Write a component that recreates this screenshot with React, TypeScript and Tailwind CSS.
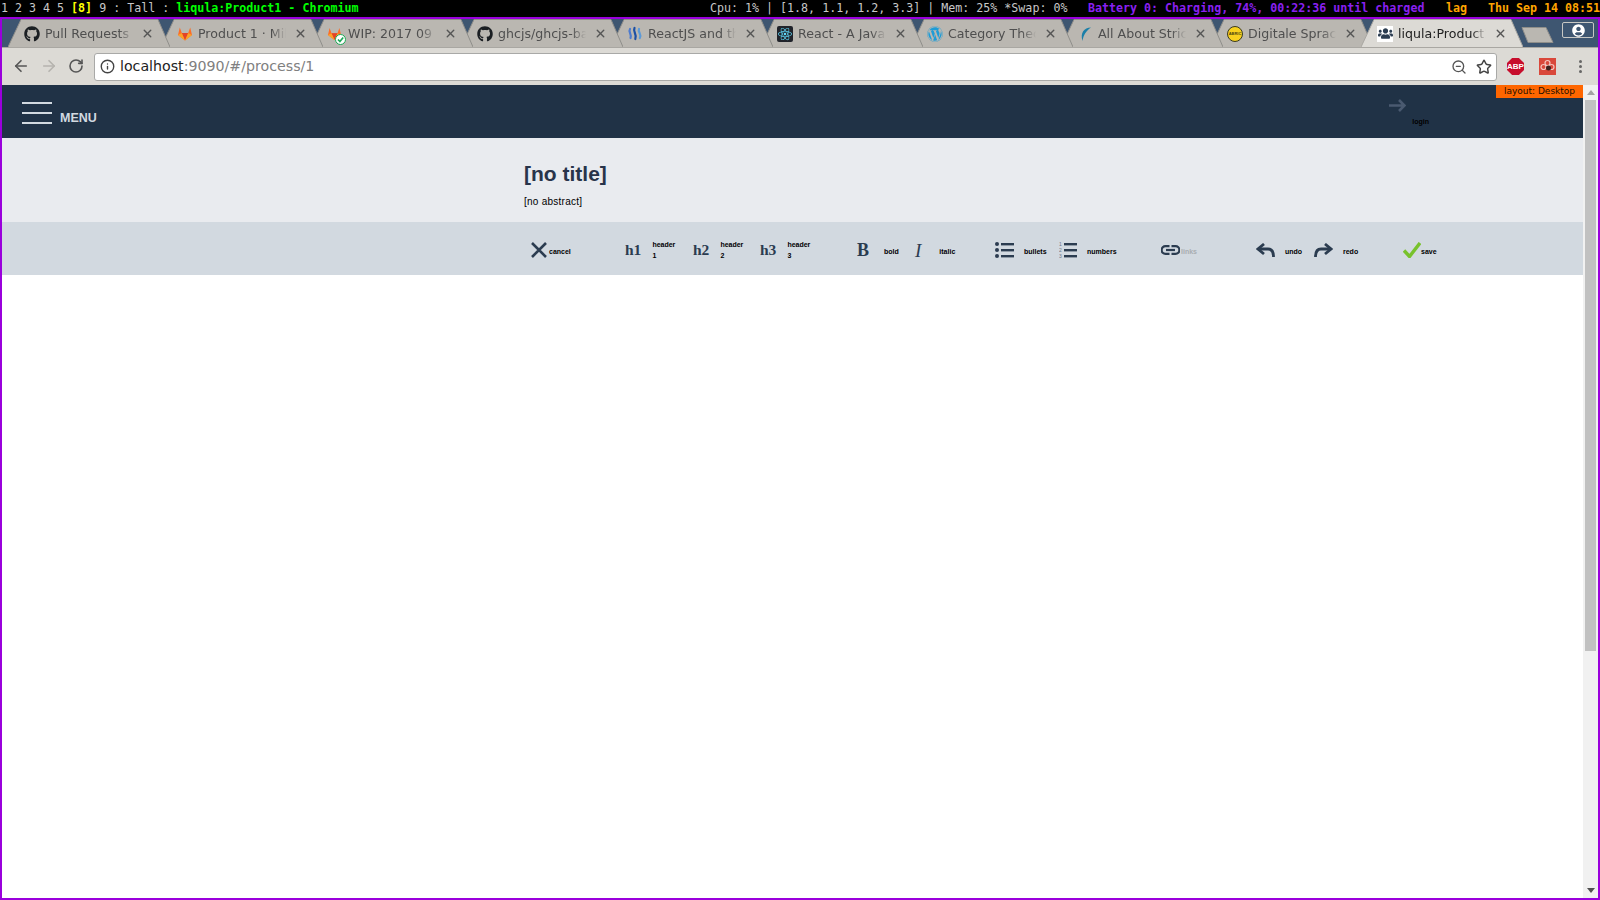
import { ArrowLeft, ArrowRight, Info, RotateCw, Star, X, ZoomOut } from 'lucide-react'
import type { ReactNode } from 'react'
import { FaGithub, FaReact, FaUsers, FaUserCircle, FaWordpress } from 'react-icons/fa'

const ink = '#2b3c50'

function GitlabIcon({ size = 17 }: { size?: number }): JSX.Element {
  return (
    <svg width={size} height={size} viewBox="0 0 16 16">
      <path d="M8 15 1 9.6 2.8 2l2 5.6h6.4L13.2 2 15 9.6z" fill="#fc6d26" />
      <path d="M8 15 4.8 7.6h6.4z" fill="#e24329" />
      <path d="M8 15 1 9.6l3.8-2zM8 15l7-5.4-3.8-2z" fill="#fca326" />
    </svg>
  )
}

function SteemIcon(): JSX.Element {
  return (
    <svg width="16" height="16" viewBox="0 0 16 16" fill="none" strokeWidth="2.2" strokeLinecap="round">
      <path d="M3 3c-2 3 2 5 .5 9" stroke="#4c7bd0" />
      <path d="M7.500 2c-2 4 3 6 .8 11" stroke="#1a4fa5" />
      <path d="M12 3c-1.500 3 3 5 .8 9" stroke="#5c9ad8" />
    </svg>
  )
}

function ReactFavicon(): JSX.Element {
  return (
    <span className="flex h-4 w-4 items-center justify-center rounded-[2px] bg-[#20232a] text-[#61dafb]">
      <FaReact size={14} />
    </span>
  )
}

function GitlabCheck(): JSX.Element {
  return (
    <span className="relative block h-4 w-4">
      <GitlabIcon size={15} />
      <span className="absolute -right-[3px] -bottom-[3px] flex h-[11px] w-[11px] items-center justify-center rounded-full border border-[#1aaa55] bg-white">
        <svg width="7" height="7" viewBox="0 0 6 6" fill="none" stroke="#1aaa55" strokeWidth="1.4">
          <path d="M.8 3 2.500 4.700 5.300 1.300" />
        </svg>
      </span>
    </span>
  )
}

function DolphinIcon(): JSX.Element {
  return (
    <svg width="16" height="16" viewBox="0 0 16 16" fill="none">
      <path d="M14 1.500C7 1.500 3 7 5.500 15 6.500 9 9 5 14 1.500z" fill="#1b7fa8" />
    </svg>
  )
}

function CoinIcon(): JSX.Element {
  return (
    <span className="flex h-4 w-4 items-center justify-center rounded-full border border-[#3a3a20] bg-[#f7d11e] font-['Liberation_Sans',sans-serif] text-[4px] leading-none font-bold text-[#4a4210]">
      ABRIC
    </span>
  )
}

function UsersFavicon(): JSX.Element {
  return (
    <span className="flex h-4 w-4 items-center justify-center bg-white text-[#2b3c50]">
      <FaUsers size={15} />
    </span>
  )
}

const tabs: { title: string; icon: ReactNode }[] = [
  { title: 'Pull Requests ·', icon: <FaGithub size={16} color="#1b1f23" /> },
  { title: 'Product 1 · Mil', icon: <GitlabIcon /> },
  { title: 'WIP: 2017 09 1', icon: <GitlabCheck /> },
  { title: 'ghcjs/ghcjs-ba', icon: <FaGithub size={16} color="#1b1f23" /> },
  { title: 'ReactJS and th', icon: <SteemIcon /> },
  { title: 'React - A Java', icon: <ReactFavicon /> },
  { title: 'Category Theo', icon: <FaWordpress size={16} color="#1e9cd7" /> },
  { title: 'All About Stric', icon: <DolphinIcon /> },
  { title: 'Digitale Sprac', icon: <CoinIcon /> },
  { title: 'liqula:Product1', icon: <UsersFavicon /> }
]

function Tab({ title, icon, active, index }: { title: string; icon: ReactNode; active: boolean; index: number }): JSX.Element {
  return (
    <div
      className={`relative h-[28px] w-[162px] shrink-0 ${index === 0 ? '-mr-[9px]' : '-mr-[12px]'}`}
      style={{ zIndex: active ? 20 : 12 - index }}
    >
      <svg className="absolute inset-0" width="162" height="28" viewBox="0 0 162 28">
        <path
          d="M0 28 13 .5H150L162 28"
          fill={active ? '#dcdad5' : '#bab7b1'}
          stroke={active ? '#a9a7a2' : '#8f8e8a'}
        />
      </svg>
      <div className="relative flex h-full items-center pt-[1px] pl-[16px]">
        <span className="flex h-4 w-4 shrink-0 items-center justify-center">{icon}</span>
        <span
          className={`mt-[1px] ml-[5px] w-[90px] overflow-hidden whitespace-nowrap text-[12.600px] [mask-image:linear-gradient(to_right,black_82%,transparent_98%)] ${
            active ? 'text-[#222]' : 'text-[#4f4f4f]'
          }`}
        >
          {title}
        </span>
        <X className="ml-[6px] text-[#555]" size={13} strokeWidth={2.6} />
      </div>
    </div>
  )
}

function TabStrip(): JSX.Element {
  return (
    <div className="flex h-[28px] items-start bg-[#3e5671] pl-[6px]">
      {tabs.map((t, i) => (
        <Tab key={t.title} title={t.title} icon={t.icon} index={i} active={i === tabs.length - 1} />
      ))}
      <svg className="mt-[8px] ml-[10px] shrink-0" width="33" height="16" viewBox="0 0 33 16">
        <path d="M1 .5H25L32 15.500H7z" fill="#bab7b1" stroke="#8f8e8a" />
      </svg>
      <div className="mt-[3px] ml-[8px] flex h-[16px] w-[32px] shrink-0 items-center justify-center rounded-[2px] border border-[#c8c8c4] bg-[#3e5671] text-white">
        <FaUserCircle size={13} />
      </div>
    </div>
  )
}

function AbpBadge(): JSX.Element {
  return (
    <span className="ml-[10px] flex h-[17px] w-[17px] items-center justify-center bg-[#c70d2c] font-['Liberation_Sans',sans-serif] text-[8px] font-bold text-white [clip-path:polygon(30%_0,70%_0,100%_30%,100%_70%,70%_100%,30%_100%,0_70%,0_30%)]">
      ABP
    </span>
  )
}

function BrowserToolbar(): JSX.Element {
  return (
    <div className="flex h-[38px] items-center border-t border-[#a9a7a2] bg-[#dcdad5] pl-[10px]">
      <ArrowLeft size={18} strokeWidth={2.2} className="-mt-[1px] text-[#555]" />
      <ArrowRight size={18} strokeWidth={2.2} className="-mt-[1px] ml-[10px] text-[#b5b3ae]" />
      <RotateCw size={16} strokeWidth={2.4} className="-mt-[1px] ml-[10px] text-[#555]" />
      <div className="ml-[10px] flex h-[28px] w-[1403px] items-center rounded-[3px] border border-[#a9a9a7] bg-white pl-[5px] text-[14.200px]">
        <Info size={15} strokeWidth={2.2} className="text-[#444]" />
        <span className="ml-[5px] text-[#222]">localhost</span>
        <span className="text-[#808080]">:9090/#/process/1</span>
        <span className="ml-auto flex items-center">
          <ZoomOut size={16} strokeWidth={2} className="text-[#555]" />
          <Star size={16} strokeWidth={2.2} className="mr-[4px] ml-[9px] text-[#444]" />
        </span>
      </div>
      <AbpBadge />
      <svg className="ml-[15px]" width="17" height="17" viewBox="0 0 17 17" fill="none">
        <rect width="17" height="17" fill="#d9483b" />
        <circle cx="8.500" cy="5" r="2.500" stroke="#f4c6c0" strokeWidth="1.200" />
        <circle cx="4.500" cy="9" r="2.500" stroke="#f4c6c0" strokeWidth="1.200" />
        <circle cx="12.500" cy="9" r="2.500" stroke="#f4c6c0" strokeWidth="1.200" />
        <circle cx="9.500" cy="10" r="2.500" fill="#3b2320" />
      </svg>
      <span className="ml-[23px] flex flex-col gap-[2px]">
        <span className="h-[3px] w-[3px] rounded-full bg-[#666]" />
        <span className="h-[3px] w-[3px] rounded-full bg-[#666]" />
        <span className="h-[3px] w-[3px] rounded-full bg-[#666]" />
      </span>
    </div>
  )
}

function StatusBar(): JSX.Element {
  return (
    <div className="flex h-[17px] items-center overflow-hidden bg-black pl-[1px] font-['DejaVu_Sans_Mono',monospace] text-[11.650px] leading-none whitespace-pre text-[#c8c8c8]">
      <span className="w-[709px] shrink-0">
        1 2 3 4 5 <span className="font-bold text-[#ffff00]">[8]</span> 9 : Tall : <span className="font-bold text-[#00ff00]">liqula:Product1 - Chromium</span>
      </span>
      <span className="w-[378px] shrink-0">Cpu: 1% | [1.8, 1.1, 1.2, 3.3] | Mem: 25% *Swap: 0%</span>
      <span className="w-[358px] shrink-0 font-bold text-[#8a20f0]">Battery 0: Charging, 74%, 00:22:36 until charged</span>
      <span className="w-[42px] shrink-0 font-bold text-[#ffa500]">lag</span>
      <span className="shrink-0 font-bold text-[#ffa500]">Thu Sep 14 08:51</span>
    </div>
  )
}

function Label({ children, className = '' }: { children: ReactNode; className?: string }): JSX.Element {
  return (
    <span className={`font-['Liberation_Sans',sans-serif] text-[7px] leading-[11px] font-bold text-black ${className}`}>
      {children}
    </span>
  )
}

function CancelIcon(): JSX.Element {
  return (
    <svg width="16" height="16" viewBox="0 0 16 16" fill="none" stroke={ink} strokeWidth="2.600">
      <path d="M1 1l14 14M15 1 1 15" />
    </svg>
  )
}

function BulletsIcon(): JSX.Element {
  return (
    <svg width="19" height="16" viewBox="0 0 19 16" fill={ink}>
      <circle cx="2" cy="2" r="2" />
      <circle cx="2" cy="8" r="2" />
      <circle cx="2" cy="14" r="2" />
      <rect x="6" y="1" width="13" height="2.400" />
      <rect x="6" y="7" width="13" height="2.400" />
      <rect x="6" y="13" width="13" height="2.400" />
    </svg>
  )
}

function NumbersIcon(): JSX.Element {
  return (
    <svg width="18" height="16" viewBox="0 0 18 16" fill={ink}>
      <text x="0" y="4" fontSize="5" fill="#6b7686" fontFamily="Liberation Sans, sans-serif">1</text>
      <text x="0" y="10" fontSize="5" fill="#6b7686" fontFamily="Liberation Sans, sans-serif">2</text>
      <text x="0" y="16" fontSize="5" fill="#6b7686" fontFamily="Liberation Sans, sans-serif">3</text>
      <rect x="5" y="1" width="13" height="2.400" />
      <rect x="5" y="7" width="13" height="2.400" />
      <rect x="5" y="13" width="13" height="2.400" />
    </svg>
  )
}

function LinkIcon(): JSX.Element {
  return (
    <svg width="19" height="10" viewBox="0 0 19 10" fill="none" stroke={ink} strokeWidth="2.200">
      <path d="M8.500 1.100H4.500a3.900 3.900 0 0 0 0 7.800h4" />
      <path d="M10.500 1.100h4a3.900 3.900 0 0 1 0 7.800h-4" />
      <path d="M5 5h9" />
    </svg>
  )
}

function UndoIcon({ flip = false }: { flip?: boolean }): JSX.Element {
  return (
    <svg
      className={flip ? '-scale-x-100' : ''}
      width="19"
      height="15"
      viewBox="0 0 19 15"
      fill="none"
      stroke={ink}
      strokeWidth="2.800"
    >
      <path d="M8 1 2 6l6 5" />
      <path d="M2 6h10c4 0 5.500 3 5.500 8" />
    </svg>
  )
}

function CheckIcon(): JSX.Element {
  return (
    <svg width="18" height="16" viewBox="0 0 18 16" fill="none" stroke="#78c22c" strokeWidth="3.400">
      <path d="M1 8.500 6.500 14.500 17 1" />
    </svg>
  )
}

function SerifGlyph({ children, className = '' }: { children: ReactNode; className?: string }): JSX.Element {
  return <span className={`font-['Liberation_Serif',serif] leading-none text-[#2b3c50] ${className}`}>{children}</span>
}

function EditorToolbar(): JSX.Element {
  return (
    <div className="flex h-[53px] items-center bg-[#d2d9e0] pt-[3px] pl-[529px]">
      <div className="flex w-[95px] items-center">
        <CancelIcon />
        <Label className="mt-[3px] ml-[2px]">cancel</Label>
      </div>
      <div className="flex w-[67px] items-center">
        <SerifGlyph className="-ml-[1px] text-[15.500px] font-bold">h1</SerifGlyph>
        <Label className="ml-[11px] w-[26px]">header 1</Label>
      </div>
      <div className="flex w-[67px] items-center">
        <SerifGlyph className="text-[15.500px] font-bold">h2</SerifGlyph>
        <Label className="ml-[11px] w-[26px]">header 2</Label>
      </div>
      <div className="flex w-[97px] items-center">
        <SerifGlyph className="text-[15.500px] font-bold">h3</SerifGlyph>
        <Label className="ml-[11px] w-[26px]">header 3</Label>
      </div>
      <div className="flex w-[58px] items-center">
        <SerifGlyph className="text-[18px] font-bold">B</SerifGlyph>
        <Label className="mt-[2px] ml-[15px]">bold</Label>
      </div>
      <div className="flex w-[80px] items-center">
        <SerifGlyph className="text-[19px] italic">I</SerifGlyph>
        <Label className="mt-[2px] ml-[18px]">italic</Label>
      </div>
      <div className="flex w-[64px] items-center">
        <BulletsIcon />
        <Label className="mt-[2px] ml-[10px]">bullets</Label>
      </div>
      <div className="flex w-[102px] items-center">
        <NumbersIcon />
        <Label className="mt-[2px] ml-[10px]">numbers</Label>
      </div>
      <div className="flex w-[95px] items-center">
        <LinkIcon />
        <Label className="mt-[2px] ml-[1px] !text-[#a9adb1]">links</Label>
      </div>
      <div className="flex w-[58px] items-center">
        <UndoIcon />
        <Label className="mt-[2px] ml-[10px]">undo</Label>
      </div>
      <div className="flex w-[89px] items-center">
        <UndoIcon flip />
        <Label className="mt-[2px] ml-[10px]">redo</Label>
      </div>
      <div className="flex items-center">
        <CheckIcon />
        <Label className="mt-[2px]">save</Label>
      </div>
    </div>
  )
}

function AppNav(): JSX.Element {
  return (
    <div className="relative flex h-[53px] items-start bg-[#203246] pl-[20px]">
      <div className="mt-[17px] flex w-[30px] flex-col gap-[8px]">
        <span className="h-[2px] bg-[#d2d9e0]" />
        <span className="h-[2px] bg-[#d2d9e0]" />
        <span className="h-[2px] bg-[#d2d9e0]" />
      </div>
      <span className="mt-[27px] ml-[8px] font-['Liberation_Sans',sans-serif] text-[12.500px] leading-none font-bold text-[#d2d9e0]">
        MENU
      </span>
      <div className="mt-[14px] mr-[154px] ml-auto flex flex-col items-start">
        <svg width="17" height="13" viewBox="0 0 17 13" fill="none" stroke="#4a5a70" strokeWidth="2.600">
          <path d="M0 6.500h15M10 1l5.500 5.500L10 12" />
        </svg>
        <Label className="mt-[4px] ml-[23px]">login</Label>
      </div>
      <div className="absolute top-0 right-0 flex h-[13px] w-[87px] items-center justify-center bg-[#ff6600] pb-[1px] font-['DejaVu_Sans',sans-serif] text-[9px] leading-none text-[#1f1000]">
        layout: Desktop
      </div>
    </div>
  )
}

function Scrollbar(): JSX.Element {
  return (
    <div className="flex w-[15px] shrink-0 flex-col items-center bg-[#f1f1f1]">
      <span className="mt-[5px] h-0 w-0 border-x-[4px] border-b-[5px] border-x-transparent border-b-[#a3a3a3]" />
      <span className="mt-[5px] h-[551px] w-[11px] bg-[#c1c1c1]" />
      <span className="mt-auto mb-[5px] h-0 w-0 border-x-[4px] border-t-[5px] border-x-transparent border-t-[#505050]" />
    </div>
  )
}

export default function App(): JSX.Element {
  return (
    <div className="flex h-[900px] w-[1600px] flex-col overflow-hidden bg-black font-['DejaVu_Sans',sans-serif]">
      <StatusBar />
      <div className="flex min-h-0 flex-1 flex-col border-2 border-[#9a00dc]">
        <TabStrip />
        <BrowserToolbar />
        <div className="flex min-h-0 flex-1 bg-white">
          <main className="min-w-0 flex-1">
            <AppNav />
            <div className="h-[84px] bg-[#e9ebef] pt-[23px] pl-[522px] font-['Liberation_Sans',sans-serif]">
              <h1 className="text-[21px] leading-[26px] font-bold text-[#28344a]">[no title]</h1>
              <p className="mt-[9px] text-[10px] leading-[12px] tracking-[0.25px] text-black">[no abstract]</p>
            </div>
            <EditorToolbar />
          </main>
          <Scrollbar />
        </div>
      </div>
    </div>
  )
}
